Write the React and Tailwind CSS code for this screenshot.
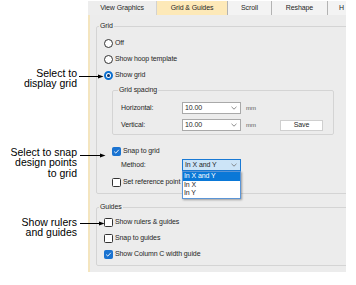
import React from "react";

const Radio = ({ checked }) => (
  <span
    className={`w-[9px] h-[9px] rounded-full shrink-0 flex items-center justify-center bg-white ${
      checked ? "border-[2px] border-[#0a6fd0]" : "border border-[#333333]"
    }`}
  >
    {checked && <span className="w-[3px] h-[3px] rounded-full bg-[#0b2f63]" />}
  </span>
);

const Check = ({ checked }) => (
  <span
    className={`w-[9px] h-[9px] rounded-[1.5px] shrink-0 flex items-center justify-center ${
      checked ? "bg-[#1a73d1] border border-[#1a73d1]" : "bg-white border border-[#333333]"
    }`}
  >
    {checked && (
      <svg width="7" height="7" viewBox="0 0 7 7">
        <path d="M1.2 3.6 L2.8 5.1 L5.8 1.8" fill="none" stroke="white" strokeWidth="0.9" />
      </svg>
    )}
  </span>
);

const Chevron = () => (
  <svg width="6" height="4" viewBox="0 0 6 4" className="shrink-0">
    <path d="M0.5 0.8 L3 3.2 L5.5 0.8" fill="none" stroke="#707070" strokeWidth="0.8" />
  </svg>
);

const Field = ({ value }) => (
  <div className="w-[59px] h-[12px] bg-white border border-[#a9a9a9] flex items-center justify-between pl-[2px] pr-[3px]">
    <span>{value}</span>
    <Chevron />
  </div>
);

const Row = ({ children, className = "" }) => (
  <div className={`h-[16px] flex items-center gap-[2px] ${className}`}>{children}</div>
);

export default function App() {
  return (
    <div className="w-[356px] h-[285px] bg-white relative overflow-hidden flex font-['Liberation_Sans',Arial,sans-serif]">
      <div className="w-[88px] shrink-0 flex flex-col items-end pr-[11px] text-[10.5px] leading-[10.5px] text-black">
        <div className="mt-[67.5px] text-right">
          Select to
          <br />
          display grid
        </div>
        <div className="mt-[58px] text-right">
          Select to snap
          <br />
          design points
          <br />
          to grid
        </div>
        <div className="mt-[38.5px] text-right">
          Show rulers
          <br />
          and guides
        </div>
      </div>

      <div className="w-[258px] h-[272px] shrink-0 flex flex-col text-[7px] leading-[10px] tracking-[-0.1px] text-[#262626]">
        <div className="h-[15px] flex items-end shrink-0">
          <div className="w-[69px] h-[14px] bg-[#ededed] border-r border-[#d2d2d2] flex items-center justify-center">
            View Graphics
          </div>
          <div className="w-[71px] h-[14px] bg-[#fde9b8] border-r border-[#b3b3b3] flex items-center justify-center">
            Grid &amp; Guides
          </div>
          <div className="w-[44px] h-[14px] bg-[#f3f3f3] border-r border-[#b3b3b3] flex items-center justify-center">
            Scroll
          </div>
          <div className="w-[56px] h-[14px] bg-[#f3f3f3] border-r border-[#b3b3b3] flex items-center justify-center">
            Reshape
          </div>
          <div className="flex-1 h-[14px] bg-[#f3f3f3] flex items-center pl-[11px] overflow-hidden">
            H
          </div>
        </div>

        <div className="flex-1 bg-[#ececec] border-l-2 border-[#f4e5bf] overflow-hidden">
          <fieldset className="ml-[6px] mt-[6px] w-[262px] border border-[#d4d4d4] rounded-[2px] p-0 pb-[3px]">
            <legend className="ml-[2px] px-[1px] leading-[10px]">Grid</legend>
            <div className="pl-[7px] pt-[4px]">
              <Row>
                <Radio />
                <span>Off</span>
              </Row>
              <Row>
                <Radio />
                <span>Show hoop template</span>
              </Row>
              <Row>
                <Radio checked />
                <span>Show grid</span>
              </Row>

              <fieldset className="ml-[8px] mt-[2px] w-[222px] border border-[#d4d4d4] rounded-[2px] p-0 pb-[3px]">
                <legend className="ml-[5px] px-[1px] leading-[10px]">Grid spacing</legend>
                <div className="pl-[8px] pt-[7px] flex flex-col gap-[5px]">
                  <div className="h-[12px] flex items-center">
                    <span className="w-[61px]">Horizontal:</span>
                    <Field value="10.00" />
                    <span className="ml-[5px] text-[6px] text-[#555555]">mm</span>
                  </div>
                  <div className="h-[12px] flex items-center">
                    <span className="w-[61px]">Vertical:</span>
                    <Field value="10.00" />
                    <span className="ml-[5px] w-[34px] text-[6px] text-[#555555]">mm</span>
                    <div className="w-[43px] h-[11px] bg-white border border-[#cfcfcf] flex items-center justify-center">
                      Save
                    </div>
                  </div>
                </div>
              </fieldset>

              <Row className="ml-[8px] mt-[8px]">
                <Check checked />
                <span>Snap to grid</span>
              </Row>
              <div className="h-[12px] flex items-center ml-[17px]">
                <span className="w-[61px]">Method:</span>
                <div className="relative">
                  <div className="w-[59px] h-[12px] bg-[#cce4f7] border border-[#1979d4] flex items-center justify-between pl-[2px] pr-[3px]">
                    <span>In X and Y</span>
                    <Chevron />
                  </div>
                  <div className="absolute left-0 top-[12px] w-[59px] bg-white border border-[#5b95d6] shadow-[1px_1px_2px_rgba(0,0,0,0.35)] z-10 leading-[8.5px]">
                    <div className="bg-[#0a78d7] text-white pl-[1px]">In X and Y</div>
                    <div className="pl-[1px]">In X</div>
                    <div className="pl-[1px]">In Y</div>
                  </div>
                </div>
              </div>
              <Row className="ml-[8px] mt-[3px]">
                <Check />
                <span className="whitespace-nowrap">Set reference point</span>
              </Row>
            </div>
          </fieldset>

          <fieldset className="ml-[6px] mt-[8px] w-[262px] border border-[#d4d4d4] rounded-[2px] p-0 pb-[3px]">
            <legend className="ml-[2px] px-[1px] leading-[10px]">Guides</legend>
            <div className="pl-[7px] pt-[2px]">
              <Row>
                <Check />
                <span>Show rulers &amp; guides</span>
              </Row>
              <Row>
                <Check />
                <span>Snap to guides</span>
              </Row>
              <Row>
                <Check checked />
                <span>Show Column C width guide</span>
              </Row>
            </div>
          </fieldset>
        </div>
      </div>

      <svg className="absolute left-0 top-0 pointer-events-none" width="356" height="285" viewBox="0 0 356 285">
        <line x1="79" y1="76.5" x2="99" y2="76.5" stroke="black" strokeWidth="1" />
        <polygon points="98,74.5 103.5,76.5 98,78.5" fill="black" />
        <line x1="80" y1="155.5" x2="101" y2="155.5" stroke="black" strokeWidth="1" />
        <polygon points="100,153.5 105.5,155.5 100,157.5" fill="black" />
        <line x1="80" y1="223.5" x2="100" y2="223.5" stroke="black" strokeWidth="1" />
        <polygon points="99,221.5 104.5,223.5 99,225.5" fill="black" />
      </svg>
    </div>
  );
}
